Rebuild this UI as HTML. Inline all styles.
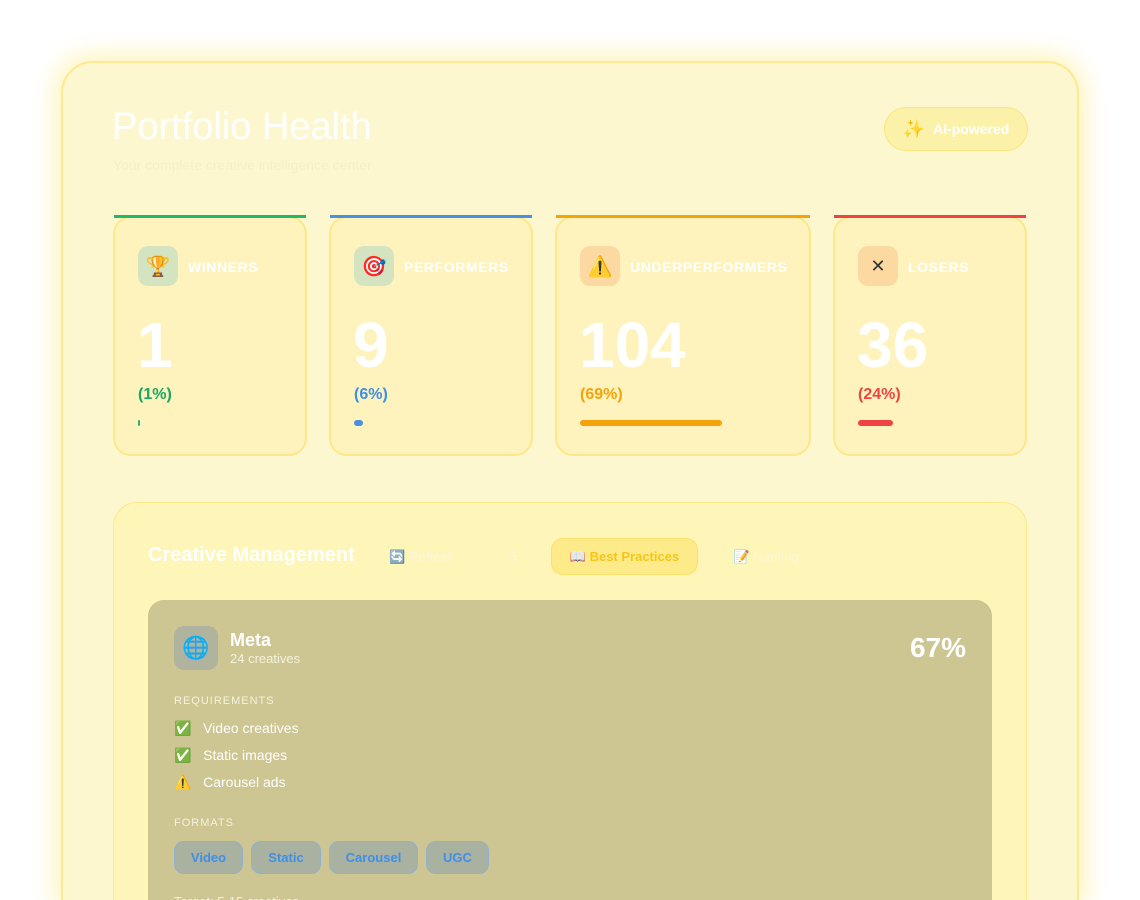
<!DOCTYPE html>
<html style="height:900px;overflow:hidden"><head><meta charset="utf-8"><style>
*{box-sizing:border-box;margin:0;padding:0}
body{width:1140px;height:900px;overflow:hidden;background:#fff;font-family:"Liberation Sans","Noto Sans CJK SC",sans-serif;position:relative}
.main{position:absolute;left:61px;top:61px;width:1018px;height:839px;border-radius:32px 32px 0 0;background:#fdf7d0;border:2px solid #fde98e;border-bottom:none;box-shadow:0 0 24px 6px rgba(253,230,100,.45)}
.title{position:absolute;left:112px;top:106px;font-size:38px;color:#fff;font-weight:400}
.sub{position:absolute;left:113px;top:157px;font-size:14px;color:#f7eec4}
.ai{position:absolute;left:884px;top:107px;width:144px;height:44px;border-radius:22px;background:#fcf1a8;border:1px solid #fbe57c;color:#fff;font-weight:bold;font-size:14px;display:flex;align-items:center;justify-content:center;gap:8px}
.card{position:absolute;top:216px;height:240px;border-radius:18px;background:#fef3bd;border:2px solid #fde889}
.line{position:absolute;top:215px;height:3px}
.ic{position:absolute;left:23px;top:28px;width:40px;height:40px;border-radius:10px;display:flex;align-items:center;justify-content:center;font-size:20px}
.lab{position:absolute;left:73px;top:41px;font-size:14px;color:#fff;font-weight:bold;letter-spacing:.6px}
.num{position:absolute;left:22px;top:90px;font-size:64px;font-weight:bold;color:#fff}
.pct{position:absolute;left:23px;top:168px;font-size:16px;font-weight:bold}
.bar{position:absolute;left:23px;top:202px;height:6px;border-radius:3px}
.sec{position:absolute;left:113px;top:502px;width:914px;height:420px;border-radius:24px;background:#fef5b8;border:1px solid #fde889}
.st{position:absolute;left:148px;top:544px;font-size:20px;font-weight:bold;color:#fff}
.btn{position:absolute;top:538px;height:37px;border-radius:12px;font-size:13px;display:flex;align-items:center;justify-content:center;color:#fdf6d6}
.inner{position:absolute;left:148px;top:600px;width:844px;height:320px;border-radius:16px;background:#cdc592}
.w{color:#fff}
.chip{display:inline-flex;align-items:center;justify-content:center;height:33px;border-radius:10px;background:#a9b2a1;border:1px solid #8fb0cf;color:#3f8ee8;font-weight:bold;font-size:13px;margin-right:8px}
</style></head><body>
<div class="main"></div>
<div class="title">Portfolio Health</div>
<div class="sub">Your complete creative intelligence center</div>
<div class="ai"><span style="font-size:18px">✨</span>AI-powered</div>

<div class="card" style="left:113px;width:194px"><div class="ic" style="background:#d5e4c0">🏆</div><div class="lab">WINNERS</div><div class="num">1</div><div class="pct" style="color:#17a865">(1%)</div><div class="bar" style="background:#22b86a;width:2px"></div></div>
<div class="card" style="left:329px;width:204px"><div class="ic" style="background:#d5e4c0">🎯</div><div class="lab">PERFORMERS</div><div class="num">9</div><div class="pct" style="color:#3f8ee8">(6%)</div><div class="bar" style="background:#4a90e2;width:9px"></div></div>
<div class="card" style="left:555px;width:256px"><div class="ic" style="background:#fcd9a0">⚠️</div><div class="lab">UNDERPERFORMERS</div><div class="num">104</div><div class="pct" style="color:#f5a30b">(69%)</div><div class="bar" style="background:#f5a30b;width:142px"></div></div>
<div class="card" style="left:833px;width:194px"><div class="ic" style="background:#fcd9a0;font-size:18px;color:#333">✕</div><div class="lab">LOSERS</div><div class="num">36</div><div class="pct" style="color:#ef4444">(24%)</div><div class="bar" style="background:#ef4444;width:35px"></div></div>
<div class="line" style="left:114px;width:192px;background:#22b86a"></div>
<div class="line" style="left:330px;width:202px;background:#4a90e2"></div>
<div class="line" style="left:556px;width:254px;background:#f5a30b"></div>
<div class="line" style="left:834px;width:192px;background:#ef4444"></div>

<div class="sec"></div>
<div class="st">Creative Management</div>
<div class="btn" style="left:372px;width:100px">🔄 Refresh</div>
<div class="btn" style="left:492px;width:42px">5</div>
<div class="btn" style="left:551px;width:147px;background:#fdeb8a;border:1px solid #fbe06a;color:#f5c518;font-weight:bold">📖 Best Practices</div>
<div class="btn" style="left:714px;width:104px">📝 Naming</div>

<div class="inner">
<div style="position:absolute;left:26px;top:26px;width:44px;height:44px;border-radius:10px;background:#b0b39e;display:flex;align-items:center;justify-content:center;font-size:22px">🌐</div>
<div class="w" style="position:absolute;left:82px;top:30px;font-size:18px;font-weight:bold">Meta</div>
<div style="position:absolute;left:82px;top:51px;font-size:13px;color:#f5f2de">24 creatives</div>
<div class="w" style="position:absolute;right:26px;top:32px;font-size:28px;font-weight:bold">67%</div>
<div style="position:absolute;left:26px;top:95px;font-size:11px;color:#f5f2de;letter-spacing:1px">REQUIREMENTS</div>
<div class="w" style="position:absolute;left:26px;top:115px;font-size:14px;line-height:27px">✅&nbsp;&nbsp; Video creatives<br>✅&nbsp;&nbsp; Static images<br>⚠️&nbsp;&nbsp; Carousel ads</div>
<div style="position:absolute;left:26px;top:217px;font-size:11px;color:#f5f2de;letter-spacing:1px">FORMATS</div>
<div style="position:absolute;left:26px;top:241px;display:flex"><span class="chip" style="width:69px">Video</span><span class="chip" style="width:70px">Static</span><span class="chip" style="width:89px">Carousel</span><span class="chip" style="width:63px">UGC</span></div>
<div style="position:absolute;left:26px;top:294px;font-size:13px;color:#f5f2de">Target: 5-15 creatives</div>
</div>
</body></html>
